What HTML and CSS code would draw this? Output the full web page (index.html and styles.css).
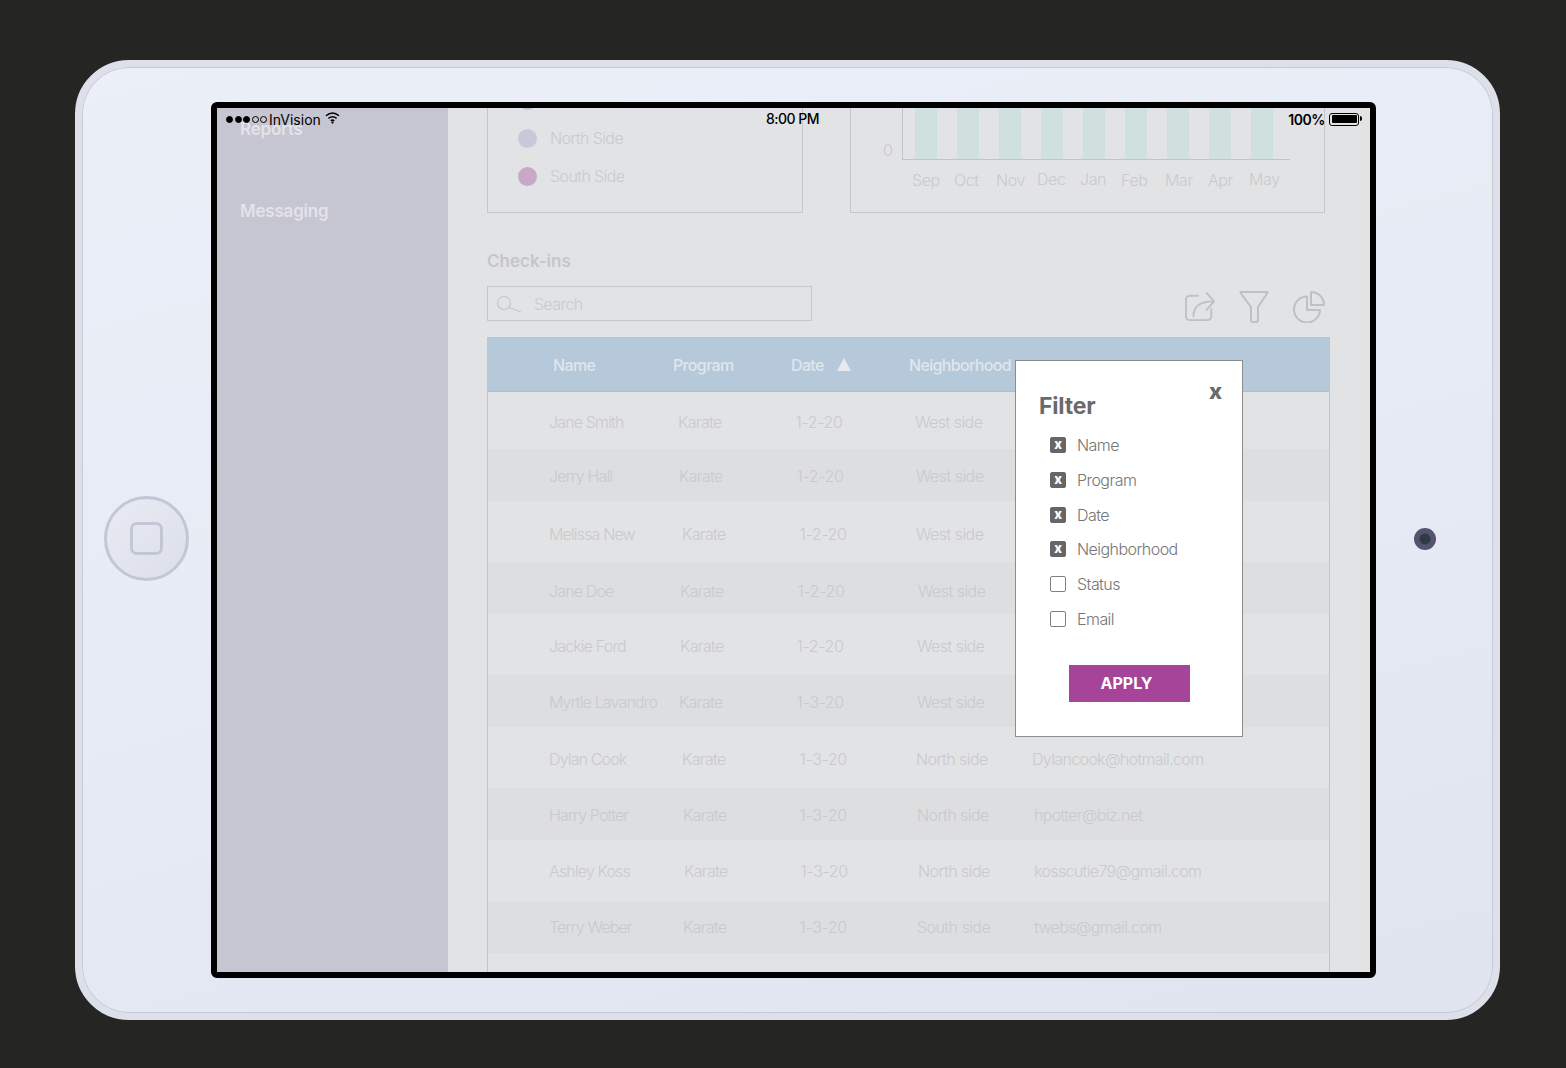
FILE: index.html
```html
<!DOCTYPE html>
<html lang="en">
<head>
<meta charset="utf-8">
<title>Check-ins filter</title>
<link rel="stylesheet" href="styles.css">
</head>
<body>
<div class="device">
  <div class="home"><div class="home-square"></div></div>
  <div class="screen">
    <aside class="sidebar">
      <div class="nav-item">Reports</div>
      <div class="nav-item">Messaging</div>
    </aside>
    <main class="main">
      <section class="cards">
        <div class="card legend">
          <div class="legend-row cut"><span class="dot dot-blue"></span></div>
          <div class="legend-row"><span class="dot dot-lav"></span>North Side</div>
          <div class="legend-row"><span class="dot dot-pink"></span>South Side</div>
        </div>
        <div class="card chart">
          <div class="zero">0</div>
          <div class="plot">
            <div class="bars"><i></i><i></i><i></i><i></i><i></i><i></i><i></i><i></i><i></i></div>
          </div>
          <div class="months"><span class="m1">Sep</span><span class="m2">Oct</span><span class="m3">Nov</span><span class="m4">Dec</span><span class="m5">Jan</span><span class="m6">Feb</span><span class="m7">Mar</span><span class="m8">Apr</span><span class="m9">May</span></div>
        </div>
      </section>
      <h2 class="heading">Check-ins</h2>
      <div class="toolbar">
        <div class="search">
          <svg class="search-icon" width="26" height="18" viewBox="0 0 26 18"><circle cx="8" cy="8" r="6.5"/><path d="M13 12.5 L25 17"/></svg>
          <span>Search</span>
        </div>
        <div class="tools">
          <svg width="30" height="31" viewBox="0 0 32 33"><path d="M14 5H5a4 4 0 0 0-4 4v18a4 4 0 0 0 4 4h19a4 4 0 0 0 4-4v-8"/><path d="M9 27c0-11 7-16 21-16"/><path d="M23 2l8 9-8 9" /></svg>
          <svg width="30" height="33" viewBox="0 0 30 33"><path d="M2 2h26q1 0 .4 1L19 17v13q0 2-2 2h-3q-2 0-2-2V17L1.600 3Q1 2 2 2z"/></svg>
          <svg width="32" height="33" viewBox="0 0 32 33"><path d="M14 6.500A13 13 0 1 0 27 20H14z"/><path d="M18 2a13 13 0 0 1 13 13H18z"/></svg>
        </div>
      </div>
      <section class="table">
        <div class="thead">
          <span class="th-name">Name</span><span class="th-prog">Program</span><span class="th-date">Date</span><span class="tri"></span><span class="th-hood">Neighborhood</span>
        </div>
        <div class="row tall first r1"><span>Jane Smith</span><span>Karate</span><span>1-2-20</span><span>West side</span></div>
        <div class="row band r2"><span>Jerry Hall</span><span>Karate</span><span>1-2-20</span><span>West side</span></div>
        <div class="row tall r3"><span>Melissa New</span><span>Karate</span><span>1-2-20</span><span>West side</span></div>
        <div class="row band r4"><span>Jane Doe</span><span>Karate</span><span>1-2-20</span><span>West side</span></div>
        <div class="row tall r5"><span>Jackie Ford</span><span>Karate</span><span>1-2-20</span><span>West side</span></div>
        <div class="row band r6"><span>Myrtle Lavandro</span><span>Karate</span><span>1-3-20</span><span>West side</span></div>
        <div class="row tall r7"><span>Dylan Cook</span><span>Karate</span><span>1-3-20</span><span>North side</span><span>Dylancook@hotmail.com</span></div>
        <div class="row band r8"><span>Harry Potter</span><span>Karate</span><span>1-3-20</span><span>North side</span><span>hpotter@biz.net</span></div>
        <div class="row tall r9"><span>Ashley Koss</span><span>Karate</span><span>1-3-20</span><span>North side</span><span>kosscutie79@gmail.com</span></div>
        <div class="row band r10"><span>Terry Weber</span><span>Karate</span><span>1-3-20</span><span>South side</span><span>twebs@gmail.com</span></div>
        <div class="row tall"></div>
      </section>
    </main>

    <div class="status">
      <div class="status-left">
        <span class="signal"><i class="on"></i><i class="on"></i><i class="on"></i><i></i><i></i></span>
        <span>InVision</span>
        <svg class="wifi" width="15" height="12" viewBox="0 0 15 12"><path d="M1 3.800C5 .4 10 .4 14 3.800"/><path d="M3.400 6.400c2.500-2 5.700-2 8.200 0"/><path d="M5.800 8.800c1-.8 2.400-.8 3.400 0"/><circle cx="7.500" cy="10.600" r="1.100"/></svg>
      </div>
      <div class="status-time">8:00 PM</div>
      <div class="status-right">
        <span class="pct">100%</span>
        <span class="battery"><i></i></span>
      </div>
    </div>

    <div class="modal">
      <div class="close">x</div>
      <h3 class="modal-title">Filter</h3>
      <ul class="options">
        <li><span class="box on">x</span>Name</li>
        <li><span class="box on">x</span>Program</li>
        <li><span class="box on">x</span>Date</li>
        <li><span class="box on">x</span>Neighborhood</li>
        <li><span class="box"></span>Status</li>
        <li><span class="box"></span>Email</li>
      </ul>
      <div class="apply">APPLY</div>
    </div>
  </div>
  <div class="camera"></div>
</div>
</body>
</html>
```
FILE: styles.css
```css
* { box-sizing: border-box; }
html, body { margin: 0; height: 100%; }
body {
  background: #252524;
  font-family: Inter, "Noto Sans", sans-serif;
  overflow: hidden;
}
.device {
  width: 1425px;
  height: 960px;
  margin: 60px 0 0 75px;
  border-radius: 54px;
  border: 7px solid #dde0e9;
  box-shadow: inset 0 0 0 1px #c6cad5;
  background: linear-gradient(165deg, #ebeff8 0%, #e7ebf5 50%, #e0e4ee 100%);
  display: grid;
  grid-template-columns: 129px 1165px 1fr;
  align-items: center;
}
.home {
  justify-self: start;
  margin: -3px 0 0 22px;
  width: 85px;
  height: 85px;
  border-radius: 50%;
  border: 3px solid #c3c7d5;
  background: linear-gradient(135deg, #e8ebf3, #dcdfea);
  display: flex;
  align-items: center;
  justify-content: center;
}
.home-square {
  width: 33px;
  height: 33px;
  border: 3px solid #c3c7d5;
  border-radius: 7px;
}
.camera {
  justify-self: start;
  margin: -3px 0 0 38px;
  width: 22px;
  height: 22px;
  border-radius: 50%;
  background: radial-gradient(circle, #2f3a47 0 5px, #55546f 6px);
}
.screen {
  position: relative;
  width: 1165px;
  height: 876px;
  border: 6px solid #000;
  border-radius: 6px;
  background: #e2e3e5;
  overflow: hidden;
  display: flex;
}
.sidebar {
  width: 231px;
  flex: none;
  background: #c6c5d2;
  padding: 10px 0 0 23px;
  color: #e3e3e9;
  font-size: 17px;
  font-weight: 600;
  letter-spacing: -.2px;
}
.nav-item { height: 82px; line-height: 22px; }
.main {
  flex: 1;
  min-width: 0;
  padding-left: 39px;
  height: 100%;
  overflow: hidden;
}
.cards {
  display: flex;
  gap: 47px;
  height: 105px;
}
.card {
  border: 1px solid #c6c7ca;
  border-top: 0;
  color: #c9cacd;
  font-size: 16px;
  font-weight: 300;
}
.legend {
  width: 316px;
  padding-left: 30px;
  overflow: hidden;
}
.legend-row {
  height: 38px;
  display: flex;
  align-items: center;
  gap: 13px;
  letter-spacing: -.6px;
}
.legend-row.cut { margin-top: -27px; }
.dot { width: 19px; height: 19px; border-radius: 50%; flex: none; }
.dot-blue { background: #b3c8d9; }
.dot-lav { background: #c8c8d8; }
.dot-pink { background: #c8a8c6; }
.chart {
  width: 475px;
  position: relative;
}
.zero { position: absolute; left: 32px; top: 32px; line-height: 20px; }
.plot {
  margin-left: 51px;
  width: 388px;
  height: 52px;
  border-left: 1px solid #c3c4c7;
  border-bottom: 1px solid #c3c4c7;
}
.bars {
  display: flex;
  gap: 19.500px;
  padding-left: 11.500px;
  height: 100%;
}
.bars i { width: 22.500px; background: #cfe0df; display: block; }
.months {
  position: relative;
  height: 24px;
  margin-top: 8px;
  line-height: 24px;
}
.months span { position: absolute; top: 0; letter-spacing: -.4px; }
.m1 { left: 61px; }
.m2 { left: 103px; }
.m3 { left: 145px; }
.m4 { left: 186px; top: -1px !important; }
.m5 { left: 229px; top: -1px !important; }
.m6 { left: 270px; }
.m7 { left: 314px; }
.m8 { left: 357px; }
.m9 { left: 398px; top: -1px !important; }
.heading {
  margin: 38px 0 0;
  height: 24px;
  line-height: 21px;
  font-size: 17px;
  font-weight: 600;
  color: #c5c6c9;
}
.toolbar {
  margin-top: 11px;
  width: 838px;
  height: 51px;
  display: flex;
  justify-content: space-between;
}
.search {
  width: 325px;
  height: 35px;
  border: 1px solid #c6c7ca;
  display: flex;
  align-items: center;
  padding-left: 8px;
  gap: 12px;
  color: #c9cacd;
  font-size: 16px;
  font-weight: 300;
  letter-spacing: -.6px;
}
.search-icon { fill: none; stroke: #c4c5c8; stroke-width: 1.200; margin-top: 1px; }
.tools {
  display: flex;
  align-items: center;
  gap: 24px;
  height: 33px;
  margin-top: 4px;
}
.tools svg {
  fill: none;
  stroke: #bfc0c3;
  stroke-width: 2;
  stroke-linecap: round;
  stroke-linejoin: round;
}
.table {
  width: 843px;
  border: 1px solid #c4c5c8;
  border-top: 1px solid #c0c4c9;
  border-bottom: 0;
  font-size: 16px;
  font-weight: 300;
  color: #c9cacd;
}
.thead {
  height: 54px;
  padding-top: 1px;
  background: #b5c9da;
  border-bottom: 1px solid #b4bcc5;
  color: #e0e6ec;
  font-weight: 500;
  letter-spacing: -.65px;
  display: flex;
  align-items: center;
  position: relative;
}
.th-name { margin-left: 65px; width: 120px; }
.th-prog { width: 118px; }
.th-date { width: 46px; }
.tri {
  width: 0;
  height: 0;
  border-left: 7px solid transparent;
  border-right: 7px solid transparent;
  border-bottom: 13px solid #e6eaee;
  margin-bottom: 2px;
}
.th-hood { margin-left: 58px; }
.row {
  display: grid;
  grid-template-columns: var(--a, 130px) var(--b, 118px) var(--c, 118px) var(--d, 117px) 1fr;
  align-items: center;
  padding: 1px 0 0 61px;
  white-space: nowrap;
  letter-spacing: -.65px;
}
.row span:nth-child(1) { letter-spacing: -.85px; }
.row span:nth-child(3) { letter-spacing: -.35px; margin-left: -.5px; }
.row span:nth-child(4) { letter-spacing: -.55px; }
.tall { height: 61px; }
.first { height: 57px; padding-top: 2px; }
.band { height: 52px; background: #dddee0; }
.r1 { --a: 129px; --b: 118px; --c: 119px; }
.r2 { --a: 130px; --b: 118px; --c: 119px; }
.r3 { --a: 133px; --b: 118px; --c: 116px; padding-top: 4px; }
.r4 { --a: 131px; --b: 118px; --c: 120px; padding-top: 5px; }
.r5 { --a: 131px; --b: 117px; --c: 120px; padding-top: 2px; }
.r6 { --a: 130px; --b: 118px; --c: 120px; }
.r7 { --a: 133px; --b: 118px; --c: 116px; --d: 116px; padding-top: 2px; }
.r8 { --a: 134px; --b: 117px; --c: 117px; --d: 117px; }
.r9 { --a: 135px; --b: 117px; --c: 117px; --d: 116px; }
.r10 { --a: 134px; --b: 117px; --c: 117px; --d: 117px; padding-top: 0; }

.status { position: absolute; inset: 0 0 auto 0; height: 24px; color: #000; font-size: 14px; }
.status-left {
  position: absolute; left: 9px; top: 2px;
  display: flex; align-items: center; gap: 2px; font-weight: 400; line-height: 19px;
}
.signal { display: flex; gap: 1.500px; }
.signal i {
  width: 7px; height: 7px; border-radius: 50%;
  border: 1px solid #000; display: block;
}
.signal i.on { background: #000; }
.wifi { margin-left: 2px; margin-top: -4px; fill: none; stroke: #000; stroke-width: 1.500; }
.wifi circle { fill: #000; stroke: none; }
.status-time { position: absolute; left: 549px; top: 2px; font-weight: 500; line-height: 18px; letter-spacing: -.5px; }
.status-right {
  position: absolute; right: 8px; top: 3px;
  display: flex; align-items: center; gap: 4px; font-weight: 600; line-height: 18px;
}
.pct { letter-spacing: -.4px; }
.battery {
  position: relative;
  width: 30px; height: 13px; border: 1.500px solid #000; border-radius: 3px;
  padding: 1.500px; margin-right: 3px; margin-top: -2px; display: block;
}
.battery i { display: block; height: 100%; background: #000; border-radius: 1px; }
.battery::after {
  content: ""; position: absolute; right: -4px; top: 2.500px;
  width: 2px; height: 5px; background: #000; border-radius: 0 2px 2px 0;
}

.modal {
  position: absolute;
  left: 798px;
  top: 252px;
  width: 228px;
  height: 377px;
  background: #fff;
  border: 1px solid #8c8c8c;
  color: #6a6a6a;
}
.close {
  position: absolute;
  right: 20px;
  top: 15px;
  font-size: 22px;
  font-weight: 800;
  line-height: 30px;
}
.modal-title {
  margin: 31px 0 0 23px;
  font-size: 23px;
  font-weight: 700;
  line-height: 28px;
  letter-spacing: -.2px;
}
.options {
  list-style: none;
  margin: 8px 0 0 34px;
  padding: 0;
  font-size: 16px;
  font-weight: 300;
  color: #767676;
  letter-spacing: -.55px;
}
.options li {
  height: 34.700px;
  display: flex;
  align-items: center;
  gap: 11px;
}
.box {
  width: 16px;
  height: 16px;
  border: 1px solid #808080;
  border-radius: 2px;
  display: flex;
  align-items: center;
  justify-content: center;
  font-size: 13px;
  font-weight: 800;
  line-height: 12px;
  padding-bottom: 2px;
  color: #fff;
  letter-spacing: 0;
}
.box.on { background: #666; border-color: #666; }
.apply {
  margin: 28.500px 0 0 53px;
  width: 121px;
  height: 37px;
  background: #a6449a;
  color: #fff;
  font-size: 16px;
  font-weight: 700;
  display: flex;
  align-items: center;
  justify-content: center;
  padding-right: 6px;
}
```
